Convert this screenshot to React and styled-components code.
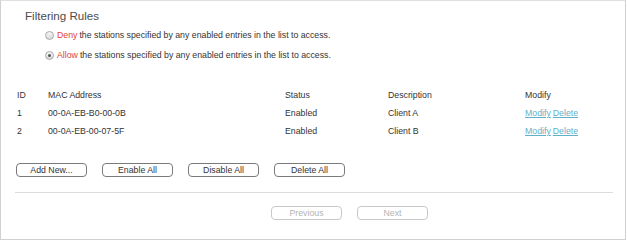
import React from 'react'
import styled, { createGlobalStyle } from 'styled-components'

const GlobalStyle = createGlobalStyle`
  html, body {
    margin: 0;
    padding: 0;
    background: #fff;
  }
  body {
    font-family: "Liberation Sans", Arial, sans-serif;
    font-size: 8.75px;
    color: #333;
  }
`

const Panel = styled.div`
  box-sizing: border-box;
  width: 626px;
  height: 240px;
  border: 1px solid #d0d0d0;
  border-top: 1px solid #e0e0e0;
  padding: 7px 12px 0 14px;
`

const Title = styled.h1`
  margin: 0 0 0 10px;
  font-size: 11.6px;
  font-weight: normal;
  color: #4c4c4c;
  line-height: 16px;
`

const RadioList = styled.div`
  display: flex;
  flex-direction: column;
  gap: 4px;
  margin: 3px 0 0 30px;
`

const RadioRow = styled.label`
  display: flex;
  align-items: center;
  height: 16px;
`

const Radio = styled.span`
  box-sizing: border-box;
  width: 9px;
  height: 9px;
  border-radius: 50%;
  border: 1px solid #a8a8a8;
  background: linear-gradient(#f6f6f6, #dadada);
  margin-right: 3px;
  display: flex;
  align-items: center;
  justify-content: center;
  &::after {
    content: '';
    width: 3px;
    height: 3px;
    border-radius: 50%;
    background: ${p => (p.checked ? '#555' : 'transparent')};
  }
`

const Red = styled.span`
  color: #e5432d;
  margin-right: 2px;
`

const Table = styled.div`
  margin-top: 22px;
  margin-left: 2px;
`

const Row = styled.div`
  display: grid;
  grid-template-columns: 31px 237px 103px 137px 1fr;
  height: ${p => (p.head ? 19 : 18)}px;
  align-items: center;
`

const Link = styled.a`
  color: #5fb0c8;
  text-decoration: underline;
  margin-right: 2px;
  cursor: pointer;
`

const ButtonBar = styled.div`
  display: flex;
  gap: 15px;
  margin-top: 23px;
  margin-left: 1px;
`

const Button = styled.button`
  box-sizing: border-box;
  width: 71px;
  height: 14px;
  padding: 0;
  border: 1px solid ${p => (p.disabled ? '#c8c8c8' : '#7a7a7a')};
  border-radius: 4px;
  background: #fff;
  font-family: "Liberation Sans", Arial, sans-serif;
  font-size: 8.75px;
  line-height: 12px;
  color: ${p => (p.disabled ? '#b4b4b4' : '#333')};
`

const Divider = styled.div`
  height: 1px;
  background: #dcdcdc;
  margin-top: 15px;
`

const Pager = styled.div`
  display: flex;
  gap: 15px;
  margin-top: 13px;
  margin-left: 256px;
`

const entries = [
  { id: 1, mac: '00-0A-EB-B0-00-0B', status: 'Enabled', desc: 'Client A' },
  { id: 2, mac: '00-0A-EB-00-07-5F', status: 'Enabled', desc: 'Client B' }
]

export default function App () {
  return (
    <>
      <GlobalStyle />
      <Panel>
        <Title>Filtering Rules</Title>
        <RadioList>
          <RadioRow>
            <Radio />
            <Red>Deny</Red>the stations specified by any enabled entries in the list to access.
          </RadioRow>
          <RadioRow>
            <Radio checked />
            <Red>Allow</Red>the stations specified by any enabled entries in the list to access.
          </RadioRow>
        </RadioList>
        <Table>
          <Row head>
            <span>ID</span>
            <span>MAC Address</span>
            <span>Status</span>
            <span>Description</span>
            <span>Modify</span>
          </Row>
          {entries.map(e => (
            <Row key={e.id}>
              <span>{e.id}</span>
              <span>{e.mac}</span>
              <span>{e.status}</span>
              <span>{e.desc}</span>
              <span>
                <Link>Modify</Link>
                <Link>Delete</Link>
              </span>
            </Row>
          ))}
        </Table>
        <ButtonBar>
          <Button>Add New...</Button>
          <Button>Enable All</Button>
          <Button>Disable All</Button>
          <Button>Delete All</Button>
        </ButtonBar>
        <Divider />
        <Pager>
          <Button disabled>Previous</Button>
          <Button disabled>Next</Button>
        </Pager>
      </Panel>
    </>
  )
}
